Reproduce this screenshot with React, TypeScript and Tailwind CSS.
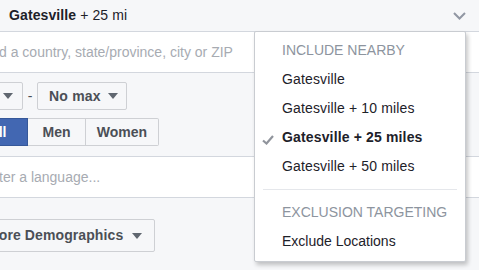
import React from "react";

const Tri = () => (
  <svg width="10" height="6" viewBox="0 0 10 6" className="shrink-0">
    <path d="M0 0 L10 0 L5 6 Z" fill="#606770" />
  </svg>
);

export default function App() {
  const items = [
    { label: "Gatesville", active: false },
    { label: "Gatesville + 10 miles", active: false },
    { label: "Gatesville + 25 miles", active: true },
    { label: "Gatesville + 50 miles", active: false },
  ];
  return (
    <div
      className="relative w-[479px] h-[270px] overflow-hidden bg-[#f6f7f9] text-[14px] text-[#1d2129]"
      style={{ fontFamily: '"Liberation Sans", Arial, sans-serif' }}
    >
      {/* top bar */}
      <div className="h-[32px] border-b border-[#d3d7de] bg-[#f6f7f9] flex items-center pl-[9px] pr-[13px]">
        <div className="flex-1 leading-none pb-[1px] tracking-[0.1px]">
          <span className="font-bold">Gatesville</span>
          <span> + 25 mi</span>
        </div>
        <svg width="13" height="8" viewBox="0 0 13 8">
          <path d="M1 1 L6.5 6.5 L12 1" stroke="#9197a3" strokeWidth="2" fill="none" />
        </svg>
      </div>
      {/* location input */}
      <div className="h-[41px] bg-white border-b border-[#d3d7de] flex items-center whitespace-nowrap text-[#a7abb2]">
        <span className="ml-[-1px]">d a country, state/province, city or ZIP</span>
      </div>
      {/* age / gender */}
      <div className="h-[83px] pt-[9px] flex flex-col gap-[8px]">
        <div className="flex items-center h-[28px]">
          <div className="ml-[-10px] w-[33px] h-[28px] bg-[#f6f7f9] border border-[#ced0d4] rounded-[2px] flex items-center justify-end pr-[9px]">
            <Tri />
          </div>
          <span className="w-[14px] text-center text-[#4b4f56]">-</span>
          <div className="w-[90px] h-[28px] bg-[#f6f7f9] border border-[#ced0d4] rounded-[2px] flex items-center pl-[11px] gap-[7px] font-bold text-[#4b4f56] tracking-[0.2px]">
            <span>No max</span>
            <Tri />
          </div>
        </div>
        <div className="flex h-[28px] font-bold">
          <div className="ml-[-33px] w-[61px] h-[28px] bg-[#4267b2] border border-[#365899] text-white flex items-center justify-center">
            All
          </div>
          <div className="w-[58px] h-[28px] bg-[#f6f7f9] border border-l-0 border-[#ced0d4] text-[#4b4f56] flex items-center justify-center">
            Men
          </div>
          <div className="w-[73px] h-[28px] bg-[#f6f7f9] border border-l-0 border-[#ced0d4] rounded-r-[2px] text-[#4b4f56] flex items-center justify-center">
            Women
          </div>
        </div>
      </div>
      {/* language input */}
      <div className="h-[42px] bg-white border-y border-[#d3d7de] flex items-center whitespace-nowrap text-[#a7abb2]">
        <span className="ml-[-1px]">ter a language...</span>
      </div>
      {/* more demographics */}
      <div className="pt-[21px]">
        <div className="ml-[-26px] w-[181px] h-[33px] bg-[#f6f7f9] border border-[#ced0d4] rounded-[2px] flex items-center pl-[12px] gap-[9px] font-bold text-[#4b4f56] whitespace-nowrap tracking-[0.1px]">
          <span>More Demographics</span>
          <Tri />
        </div>
      </div>

      {/* dropdown menu */}
      <div className="absolute left-[254px] top-[31px] w-[212px] h-[231px] bg-white border border-[#c9ccd1] rounded-[2px] shadow-[2px_3px_4px_rgba(0,0,0,0.22)] pt-[4px]">
        <div className="h-[29px] flex items-center pl-[27px] text-[#8d949e]">INCLUDE NEARBY</div>
        {items.map((it) => (
          <div key={it.label} className="relative h-[29px] flex items-center pl-[27px] tracking-[0.15px]">
            {it.active && (
              <svg className="absolute left-[7px] top-[12px]" width="12" height="10" viewBox="0 0 12 10">
                <path d="M1 5.5 L4.5 8.5 L11 1" stroke="#90949c" strokeWidth="2.2" fill="none" />
              </svg>
            )}
            <span className={it.active ? "font-bold" : ""}>{it.label}</span>
          </div>
        ))}
        <div className="mx-[8px] my-[8px] h-px bg-[#e5e7eb]" />
        <div className="h-[29px] flex items-center pl-[27px] text-[#8d949e]">EXCLUSION TARGETING</div>
        <div className="h-[29px] flex items-center pl-[27px]">Exclude Locations</div>
      </div>
    </div>
  );
}
